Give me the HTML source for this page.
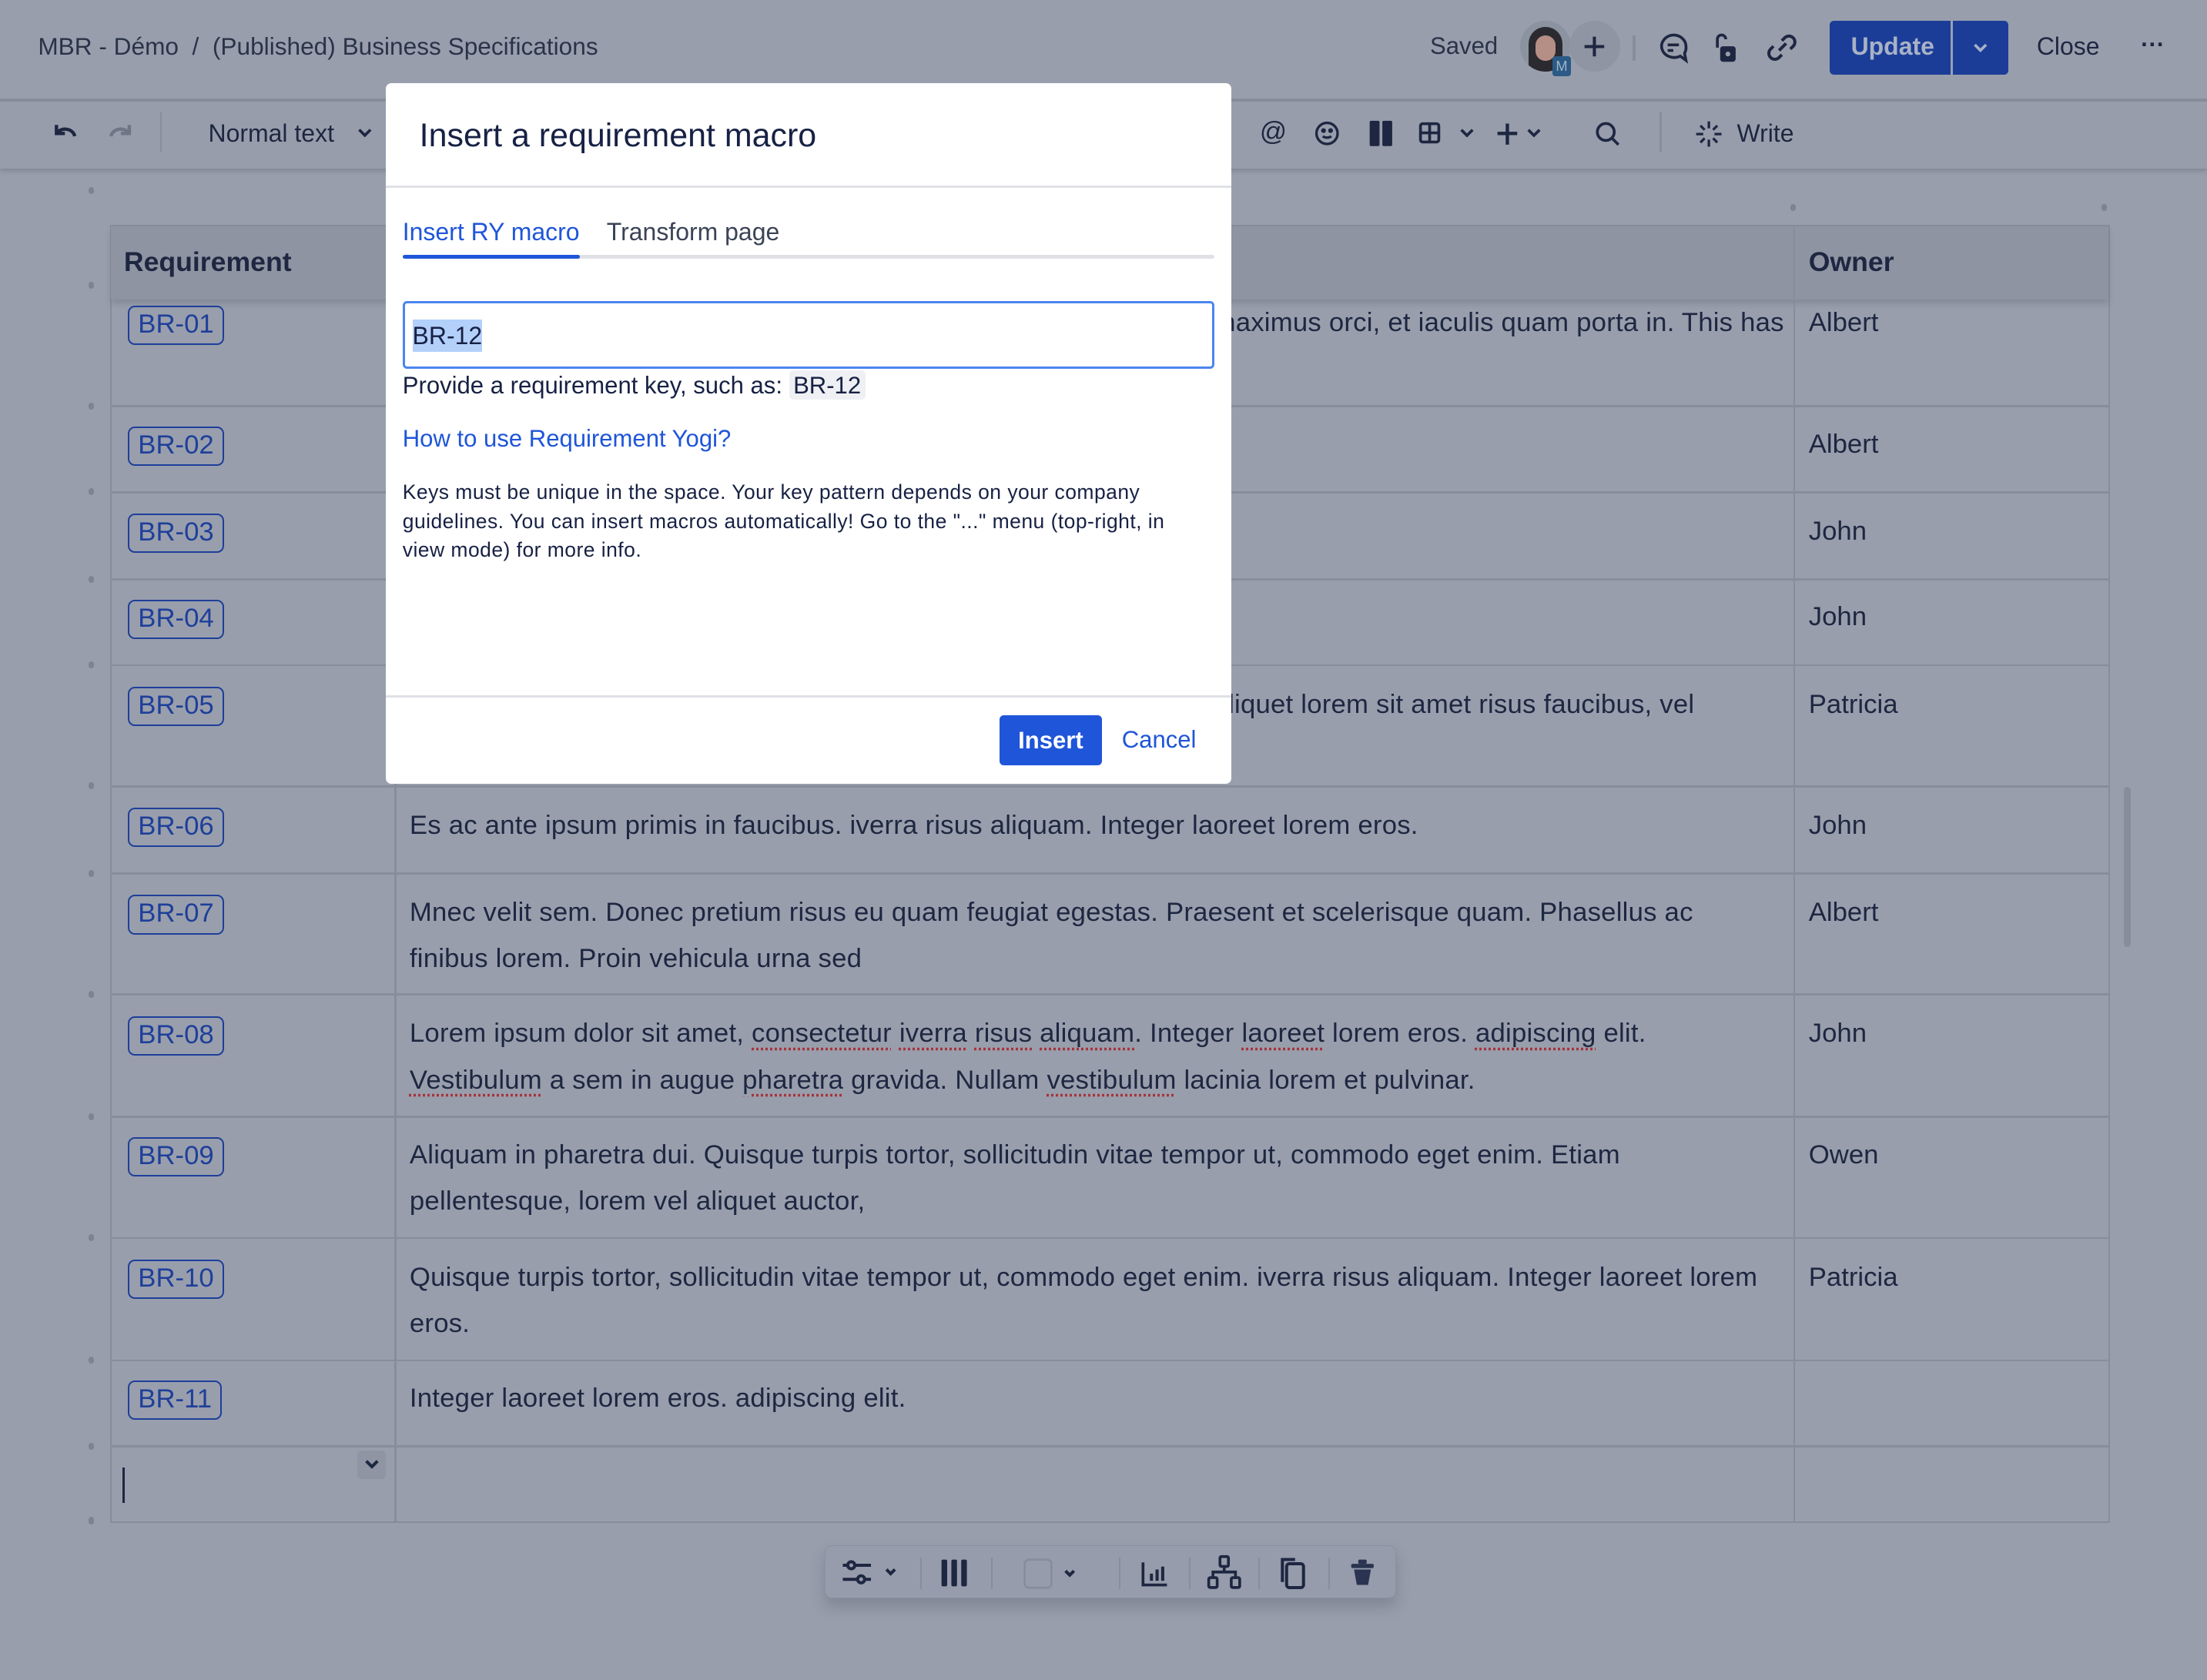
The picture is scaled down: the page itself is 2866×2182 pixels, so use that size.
<!DOCTYPE html>
<html><head><meta charset="utf-8">
<style>
*{box-sizing:border-box;margin:0;padding:0}
html,body{width:2866px;height:2182px;overflow:hidden;background:#989eac}
#z{zoom:1.82781;width:1568px;height:1194px;position:relative;font-family:"Liberation Sans",Arial,sans-serif;color:#1e2741;background:#989eac}
.a{position:absolute;white-space:nowrap}
.hl{position:absolute;background:#878d9b}
.tag{position:absolute;left:91px;height:28px;border:1.5px solid #1e3f9a;border-radius:5px;color:#1e3f9a;font-size:19px;line-height:25px;padding:0 6px}
.cell{position:absolute;left:291px;font-size:19px;letter-spacing:.12px;line-height:33px;white-space:nowrap}
.own{position:absolute;left:1285px;font-size:19px;line-height:33px}
.sp{text-decoration:underline dotted #a8323a;text-underline-offset:4px}
.dot{position:absolute;left:63px;width:4px;height:5px;border-radius:2px;background:#7d8391}
svg{position:absolute}
</style></head><body><div id="z">
<!-- top bar -->
<div class="a" style="left:27px;top:23px;font-size:17.3px;color:#2a3348">MBR - Démo &nbsp;/&nbsp; (Published) Business Specifications</div>
<div class="hl" style="left:0;top:70px;width:1568px;height:2px"></div>
<div class="a" style="left:1016px;top:23px;font-size:17px;color:#2a3348">Saved</div>
<div class="a" style="left:1080px;top:15px;width:36px;height:36px;border-radius:50%;background:#8c93a0;overflow:hidden">
 <div style="position:absolute;left:6px;top:4px;width:24px;height:34px;border-radius:12px 12px 4px 4px;background:#2b2a30"></div>
 <div style="position:absolute;left:11px;top:10px;width:14px;height:18px;border-radius:7px;background:#b58f86"></div>
</div>
<div class="a" style="left:1103px;top:40px;width:13px;height:14px;background:#2a5a85;color:#9fb4c8;font-size:10px;text-align:center;line-height:14px;border-radius:2px">M</div>
<div class="a" style="left:1115px;top:15px;width:36px;height:36px;border-radius:50%;background:#8f95a3"></div>
<svg style="left:1124px;top:24px" width="18" height="18"><path d="M9 2v14M2 9h14" stroke="#1e2741" stroke-width="2.2"/></svg>
<div class="hl" style="left:1160px;top:25px;width:2px;height:18px"></div>
<svg style="left:1177px;top:22px" width="24" height="24" fill="none" stroke="#1e2741" stroke-width="2"><path d="M12 3a9 8 0 1 0 5 15l4 3-1-5a8 8 0 0 0 1-5 9 8 0 0 0-9-8z"/><path d="M8 10h8M8 14h4"/></svg>
<svg style="left:1215px;top:22px" width="24" height="24"><path d="M5 12V6a3 3 0 0 1 6 0" fill="none" stroke="#1e2741" stroke-width="2"/><rect x="7" y="11" width="11" height="11" rx="2" fill="#1e2741"/><circle cx="12.5" cy="16.5" r="1.7" fill="#989eac"/></svg>
<svg style="left:1254px;top:22px" width="24" height="24" fill="none" stroke="#1e2741" stroke-width="2.2"><path d="M10 14l5-5M12 7l2-2a4 4 0 0 1 6 6l-2 2M12 17l-2 2a4 4 0 0 1-6-6l2-2"/></svg>
<div class="a" style="left:1300px;top:15px;width:127px;height:38px;background:#1b3d98;border-radius:3px"></div>
<div class="a" style="left:1386px;top:15px;width:1.5px;height:38px;background:#98a0b4"></div>
<div class="a" style="left:1315px;top:23px;font-size:17.5px;color:#a8b2c6;font-weight:bold">Update</div>
<svg style="left:1400px;top:27px" width="14" height="14"><path d="M3 5l4 4 4-4" fill="none" stroke="#a8b2c6" stroke-width="2"/></svg>
<div class="a" style="left:1447px;top:23px;font-size:17.5px;color:#1e2741">Close</div>
<div class="a" style="left:1521px;top:22px;font-size:17px;font-weight:bold">&middot;&middot;&middot;</div>
<!-- toolbar -->
<div class="a" style="left:0;top:72px;width:1568px;height:48px;background:#979dab;box-shadow:0 2px 3px rgba(60,65,80,.25)"></div>
<svg style="left:36px;top:85px" width="22" height="20" fill="none" stroke="#1e2741" stroke-width="2.4"><path d="M4 4v6h6M4 10a7 6 0 0 1 13 2"/></svg>
<svg style="left:74px;top:85px" width="22" height="20" fill="none" stroke="#6f7584" stroke-width="2.4"><path d="M18 4v6h-6M18 10a7 6 0 0 0-13 2"/></svg>
<div class="hl" style="left:114px;top:80px;width:1px;height:28px"></div>
<div class="a" style="left:148px;top:85px;font-size:17.5px">Normal text</div>
<svg style="left:252px;top:89px" width="14" height="12"><path d="M3 3l4 4 4-4" fill="none" stroke="#1e2741" stroke-width="2"/></svg>
<div class="a" style="left:895px;top:83px;font-size:19px">@</div>
<svg style="left:933px;top:85px" width="20" height="20" fill="none" stroke="#1e2741" stroke-width="1.8"><circle cx="10" cy="10" r="7.5"/><path d="M7 12a4 3 0 0 0 6 0"/><circle cx="7.5" cy="8" r=".8" fill="#1e2741"/><circle cx="12.5" cy="8" r=".8" fill="#1e2741"/></svg>
<svg style="left:971px;top:85px" width="22" height="20"><rect x="2" y="1" width="7" height="18" rx="1" fill="#1e2741"/><rect x="11" y="1" width="7" height="18" rx="1" fill="#1e2741"/></svg>
<svg style="left:1007px;top:86px" width="18" height="18" fill="none" stroke="#1e2741" stroke-width="2"><rect x="2" y="2" width="13" height="13" rx="1.5"/><path d="M8.5 2v13M2 8.5h13"/></svg>
<svg style="left:1036px;top:90px" width="12" height="10"><path d="M2 2l4 4 4-4" fill="none" stroke="#1e2741" stroke-width="2"/></svg>
<svg style="left:1062px;top:85px" width="18" height="20"><path d="M9 3v15M2 10h14" stroke="#1e2741" stroke-width="2.4"/></svg>
<svg style="left:1084px;top:90px" width="12" height="10"><path d="M2 2l4 4 4-4" fill="none" stroke="#1e2741" stroke-width="2"/></svg>
<svg style="left:1131px;top:85px" width="22" height="22" fill="none" stroke="#1e2741" stroke-width="2"><circle cx="10" cy="9" r="6"/><path d="M14 13l5 5"/></svg>
<div class="hl" style="left:1179px;top:80px;width:1.5px;height:28px"></div>
<svg style="left:1203px;top:84px" width="22" height="22" stroke="#1e2741" stroke-width="1.8"><path d="M11 2v5M11 15v5M2 11h5M15 11h5M5 5l3 3M14 14l3 3M17 5l-3 3M8 14l-3 3"/></svg>
<div class="a" style="left:1234px;top:85px;font-size:17.5px">Write</div>
<!-- dots -->
<div class="dot" style="top:133px"></div><div class="dot" style="top:200px"></div><div class="dot" style="top:286px"></div><div class="dot" style="top:347px"></div><div class="dot" style="top:409px"></div><div class="dot" style="top:470px"></div><div class="dot" style="top:556px"></div><div class="dot" style="top:618px"></div><div class="dot" style="top:704px"></div><div class="dot" style="top:791px"></div><div class="dot" style="top:877px"></div><div class="dot" style="top:964px"></div><div class="dot" style="top:1025px"></div><div class="dot" style="top:1078px"></div>
<div class="dot" style="left:1272px;top:145px"></div><div class="dot" style="left:1493px;top:145px"></div>
<!-- table -->
<div class="a" style="left:78px;top:160px;width:1421px;height:922px;border:1.5px solid #878d9b"></div>
<div class="a" style="left:79px;top:161px;width:1419px;height:52px;background:#8e94a2;box-shadow:0 3px 4px rgba(60,65,80,.2)"></div>
<div class="a" style="left:88px;top:175px;font-size:19.5px;font-weight:bold">Requirement</div>
<div class="a" style="left:1285px;top:175px;font-size:19.5px;font-weight:bold">Owner</div>
<div class="hl" style="left:280px;top:160px;width:1.5px;height:922px"></div>
<div class="hl" style="left:1274px;top:160px;width:1.5px;height:922px"></div>
<div class="hl" style="left:78px;top:288px;width:1421px;height:1.5px"></div>
<div class="hl" style="left:78px;top:349px;width:1421px;height:1.5px"></div>
<div class="hl" style="left:78px;top:411px;width:1421px;height:1.5px"></div>
<div class="hl" style="left:78px;top:472px;width:1421px;height:1.5px"></div>
<div class="hl" style="left:78px;top:558px;width:1421px;height:1.5px"></div>
<div class="hl" style="left:78px;top:620px;width:1421px;height:1.5px"></div>
<div class="hl" style="left:78px;top:706px;width:1421px;height:1.5px"></div>
<div class="hl" style="left:78px;top:793px;width:1421px;height:1.5px"></div>
<div class="hl" style="left:78px;top:879px;width:1421px;height:1.5px"></div>
<div class="hl" style="left:78px;top:966px;width:1421px;height:1.5px"></div>
<div class="hl" style="left:78px;top:1027px;width:1421px;height:1.5px"></div>

<div class="tag" style="top:217px">BR-01</div>
<div class="tag" style="top:303px">BR-02</div>
<div class="tag" style="top:365px">BR-03</div>
<div class="tag" style="top:426px">BR-04</div>
<div class="tag" style="top:488px">BR-05</div>
<div class="tag" style="top:574px">BR-06</div>
<div class="tag" style="top:636px">BR-07</div>
<div class="tag" style="top:722px">BR-08</div>
<div class="tag" style="top:808px">BR-09</div>
<div class="tag" style="top:895px">BR-10</div>
<div class="tag" style="top:981px">BR-11</div>

<div class="cell" style="left:862px;top:213px">maximus orci, et iaculis quam porta in. This has</div>
<div class="cell" style="left:862px;top:484px">aliquet lorem sit amet risus faucibus, vel</div>
<div class="cell" style="top:570px">Es ac ante ipsum primis in faucibus. iverra risus aliquam. Integer laoreet lorem eros.</div>
<div class="cell" style="top:632px">Mnec velit sem. Donec pretium risus eu quam feugiat egestas. Praesent et scelerisque quam. Phasellus ac<br>finibus lorem. Proin vehicula urna sed</div>
<div class="cell" style="top:718px">Lorem ipsum dolor sit amet, <span class="sp">consectetur</span> <span class="sp">iverra</span> <span class="sp">risus</span> <span class="sp">aliquam</span>. Integer <span class="sp">laoreet</span> lorem eros. <span class="sp">adipiscing</span> elit.<br><span class="sp">Vestibulum</span> a sem in augue <span class="sp">pharetra</span> gravida. Nullam <span class="sp">vestibulum</span> lacinia lorem et pulvinar.</div>
<div class="cell" style="top:804px">Aliquam in pharetra dui. Quisque turpis tortor, sollicitudin vitae tempor ut, commodo eget enim. Etiam<br>pellentesque, lorem vel aliquet auctor,</div>
<div class="cell" style="top:891px">Quisque turpis tortor, sollicitudin vitae tempor ut, commodo eget enim. iverra risus aliquam. Integer laoreet lorem<br>eros.</div>
<div class="cell" style="top:977px">Integer laoreet lorem eros. adipiscing elit.</div>

<div class="own" style="top:213px">Albert</div>
<div class="own" style="top:299px">Albert</div>
<div class="own" style="top:361px">John</div>
<div class="own" style="top:422px">John</div>
<div class="own" style="top:484px">Patricia</div>
<div class="own" style="top:570px">John</div>
<div class="own" style="top:632px">Albert</div>
<div class="own" style="top:718px">John</div>
<div class="own" style="top:804px">Owen</div>
<div class="own" style="top:891px">Patricia</div>

<div class="a" style="left:87px;top:1043px;width:1.5px;height:25px;background:#1e2741"></div>
<div class="a" style="left:254px;top:1031px;width:20px;height:20px;border-radius:3px;background:#8f95a3"></div>
<svg style="left:258px;top:1036px" width="12" height="10"><path d="M2 2l4 4 4-4" fill="none" stroke="#1e2741" stroke-width="2.2"/></svg>
<div class="a" style="left:1509px;top:559px;width:5px;height:114px;border-radius:3px;background:#878d9b"></div>

<!-- floating toolbar -->
<div class="a" style="left:586px;top:1098px;width:406px;height:38px;background:#969cab;border:1px solid #8a90a0;border-radius:5px;box-shadow:0 6px 10px rgba(60,65,80,.25)"></div>
<svg style="left:596px;top:1106px" width="50" height="24" stroke="#1e2741" stroke-width="2.2" fill="none"><path d="M3 6h20M3 16h20"/><circle cx="9" cy="6" r="2.5" fill="#969cab"/><circle cx="16" cy="16" r="2.5" fill="#969cab"/><path d="M34 9l3 3 3-3"/></svg>
<div class="hl" style="left:654px;top:1107px;width:1px;height:22px"></div>
<svg style="left:667px;top:1106px" width="24" height="24" fill="#1e2741"><rect x="2" y="2" width="4" height="19" rx="1"/><rect x="9" y="2" width="4" height="19" rx="1"/><rect x="16" y="2" width="4" height="19" rx="1"/></svg>
<div class="hl" style="left:704px;top:1107px;width:1px;height:22px"></div>
<svg style="left:726px;top:1106px" width="44" height="24" fill="none" stroke="#1e2741"><rect x="2" y="2" width="19" height="20" rx="3" stroke="#878d9b" stroke-width="1.5"/><path d="M31 10l3 3 3-3" stroke-width="2.2"/></svg>
<div class="hl" style="left:795px;top:1107px;width:1px;height:22px"></div>
<svg style="left:808px;top:1106px" width="24" height="24" fill="none" stroke="#1e2741" stroke-width="2"><path d="M4 4v16h17"/><path d="M10 12v5M14 9v8M18 7v10" stroke-width="2.2"/></svg>
<div class="hl" style="left:845px;top:1107px;width:1px;height:22px"></div>
<svg style="left:857px;top:1104px" width="26" height="26" fill="none" stroke="#1e2741" stroke-width="2"><rect x="10" y="2" width="6" height="7" rx="1"/><rect x="2" y="17" width="6" height="7" rx="1"/><rect x="18" y="17" width="6" height="7" rx="1"/><path d="M13 9v4M5 17v-4h16v4"/></svg>
<div class="hl" style="left:894px;top:1107px;width:1px;height:22px"></div>
<svg style="left:907px;top:1105px" width="24" height="26" fill="none" stroke="#1e2741" stroke-width="2.2"><path d="M4 19V3h9"/><rect x="7" y="6" width="12" height="17" rx="2"/></svg>
<div class="hl" style="left:944px;top:1107px;width:1px;height:22px"></div>
<svg style="left:958px;top:1106px" width="20" height="24" fill="#2a3350"><rect x="2" y="5" width="16" height="3" rx="1"/><rect x="7" y="2" width="6" height="3" rx="1"/><path d="M4 9h12l-2 11H6z"/></svg>

<!-- dialog -->
<div class="a" style="left:274px;top:59px;width:601px;height:498px;background:#fff;border-radius:4px"></div>
<div class="a" style="left:298px;top:83px;font-size:23.5px;color:#172144">Insert a requirement macro</div>
<div class="a" style="left:274px;top:132px;width:601px;height:1.5px;background:#dfe1e6"></div>
<div class="a" style="left:286px;top:155px;font-size:17.5px;color:#1f55d9">Insert RY macro</div>
<div class="a" style="left:431px;top:155px;font-size:17.5px;color:#3b4356">Transform page</div>
<div class="a" style="left:286px;top:181px;width:577px;height:3px;background:#dfe1e6;border-radius:2px"></div>
<div class="a" style="left:286px;top:181px;width:126px;height:3px;background:#1f55d9;border-radius:2px"></div>
<div class="a" style="left:286px;top:214px;width:577px;height:48px;border:2px solid #4c85f0;border-radius:3px"></div>
<div class="a" style="left:293px;top:227px;height:23px;background:#b3d0fb;font-size:17.5px;line-height:23px;color:#172144">BR-12</div>
<div class="a" style="left:286px;top:264px;font-size:17px;color:#172144">Provide a requirement key, such as: <span style="background:#eef0f3;border-radius:3px;padding:1px 3px">BR-12</span></div>
<div class="a" style="left:286px;top:302px;font-size:17px;color:#1f55d9">How to use Requirement Yogi?</div>
<div class="a" style="left:286px;top:340px;font-size:14.5px;letter-spacing:.25px;line-height:20.5px;color:#172144">Keys must be unique in the space. Your key pattern depends on your company<br>guidelines. You can insert macros automatically! Go to the "..." menu (top-right, in<br>view mode) for more info.</div>
<div class="a" style="left:274px;top:494px;width:601px;height:1.5px;background:#dfe1e6"></div>
<div class="a" style="left:710px;top:508px;width:73px;height:36px;background:#1f55d9;border-radius:3px;color:#fff;font-weight:bold;font-size:17px;line-height:36px;text-align:center">Insert</div>
<div class="a" style="left:797px;top:516px;font-size:17px;color:#1f55d9">Cancel</div>
</div></body></html>
